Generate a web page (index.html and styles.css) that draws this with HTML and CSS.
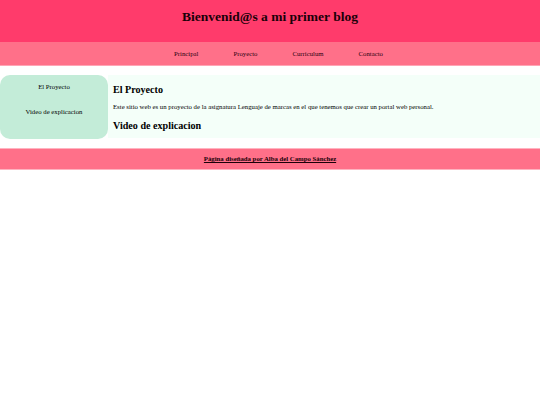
FILE: index.html
```html
<!DOCTYPE html>
<html lang="es">
<head>
<meta charset="utf-8">
<title>Blog</title>
<link rel="stylesheet" href="styles.css">
</head>
<body>
<header class="site-header">
  <h1 class="site-title">Bienvenid@s a mi primer blog</h1>
</header>
<nav class="main-nav">
  <a href="#">Principal</a>
  <a href="#">Proyecto</a>
  <a href="#">Curriculum</a>
  <a href="#">Contacto</a>
</nav>
<div class="page">
  <aside class="sidebar">
    <a href="#proyecto">El Proyecto</a>
    <a href="#video">Video de explicacion</a>
  </aside>
  <main class="content">
    <h2 id="proyecto">El Proyecto</h2>
    <p>Este sitio web es un proyecto de la asignatura Lenguaje de marcas en el que tenemos que crear un portal web personal.</p>
    <h2 id="video">Video de explicacion</h2>
  </main>
</div>
<footer class="site-footer">
  <a href="#">Página diseñada por Alba del Campo Sánchez</a>
</footer>
</body>
</html>
```

FILE: styles.css
```css
html, body {
  margin: 0;
  padding: 0;
  background: #ffffff;
}
body {
  font-family: "Liberation Serif", "Times New Roman", serif;
  font-size: 6.75px;
  color: #000;
}
.site-header {
  background: #ff3b6b;
  height: 42px;
  display: flex;
  justify-content: center;
  align-items: flex-start;
}
.site-title {
  margin: 9px 0 0;
  font-size: 13.5px;
  line-height: 16px;
  font-weight: bold;
  color: #1a0008;
}
.main-nav {
  background: #ff7089;
  height: 24px;
  border-bottom: 1px solid #ffa5b5;
  display: flex;
  justify-content: center;
  align-items: center;
  gap: 35px;
  padding-left: 17px;
  box-sizing: border-box;
}
.main-nav a {
  color: #2a0010;
  text-decoration: none;
  font-size: 6.75px;
  line-height: 8px;
  margin-top: 1px;
}
.page {
  display: flex;
  margin-top: 9px;
  align-items: flex-start;
}
.sidebar {
  width: 108px;
  height: 64px;
  background: #c3ecd8;
  border-radius: 10px;
  display: flex;
  flex-direction: column;
  align-items: center;
  padding-top: 8px;
  gap: 17px;
  box-sizing: border-box;
  flex-shrink: 0;
}
.sidebar a {
  color: #000;
  text-decoration: none;
  line-height: 8px;
}
.content {
  flex: 1;
  background: #f4fff9;
  height: 63px;
  padding: 9px 5px 0;
  box-sizing: border-box;
}
.content h2 {
  font-size: 10.1px;
  line-height: 12px;
  margin: 0;
}
.content p {
  margin: 7px 0 9px;
  line-height: 8px;
}
.site-footer {
  margin-top: 9px;
  background: #ff7089;
  height: 22px;
  border-top: 1px solid #ffb3c0;
  border-bottom: 1px solid #ffb3c0;
  box-sizing: border-box;
  display: flex;
  justify-content: center;
  align-items: center;
}
.site-footer a {
  color: #1a0008;
  font-weight: bold;
  line-height: 8px;
}
```
